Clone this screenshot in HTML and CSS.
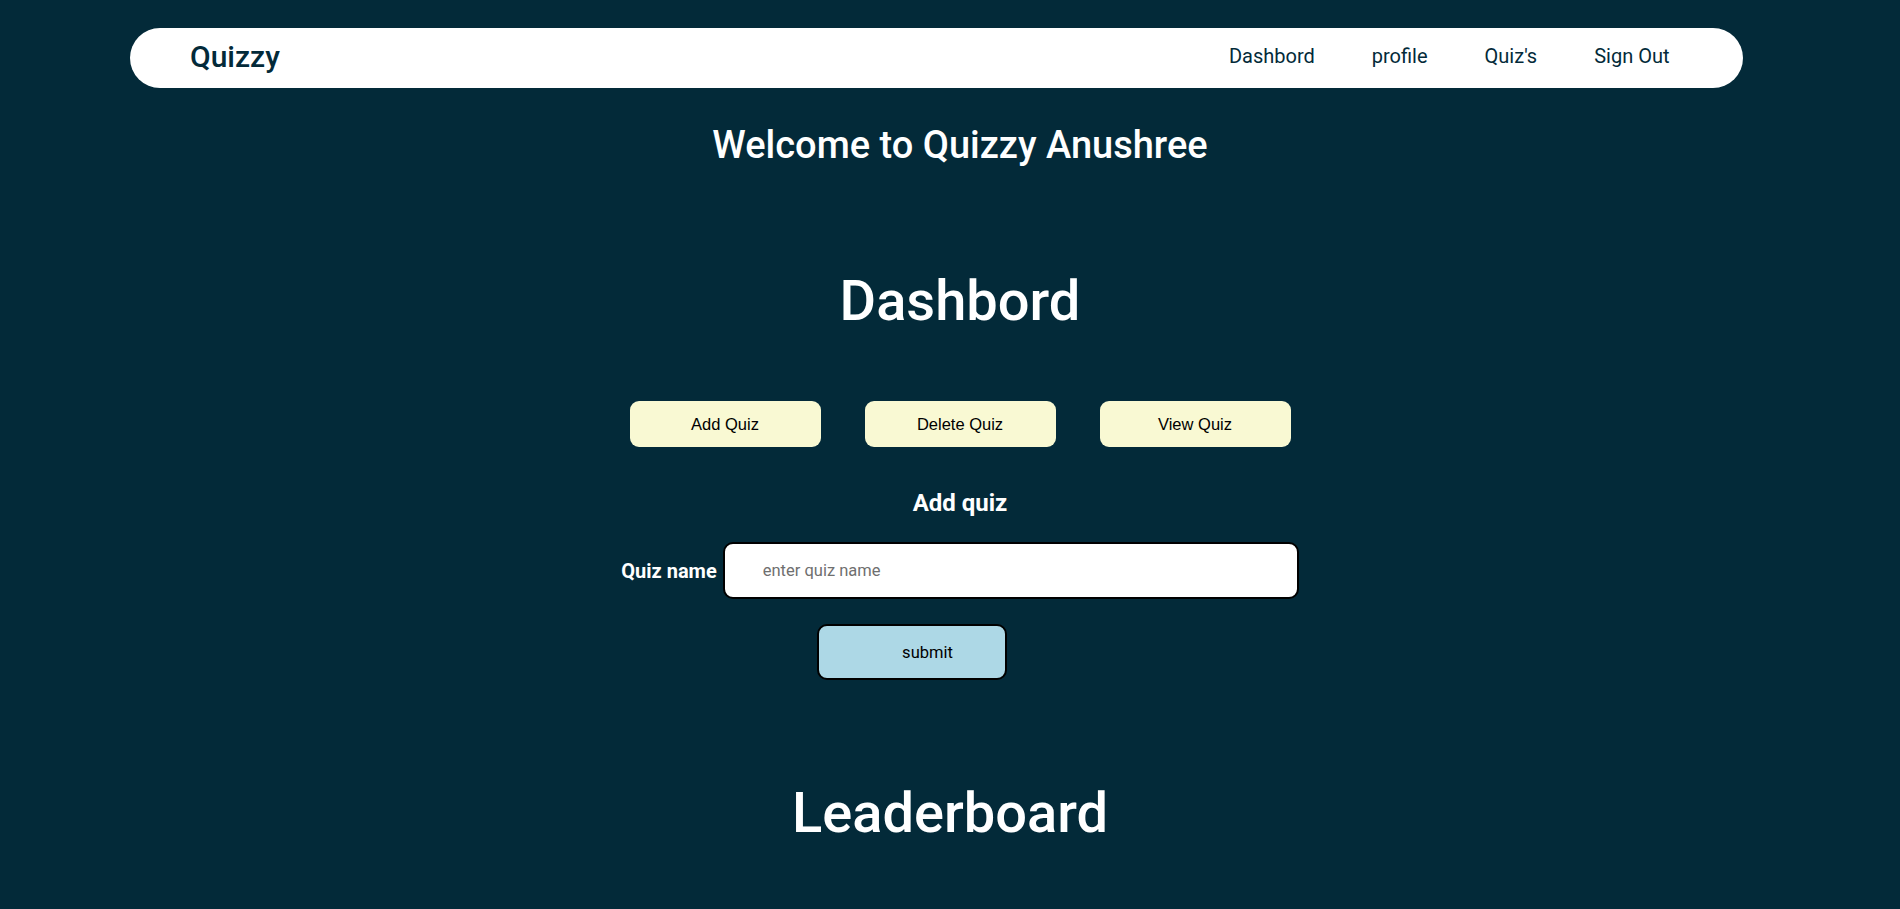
FILE: index.html
```html
<!DOCTYPE html>
<html lang="en">
<head>
<meta charset="utf-8">
<title>Quizzy</title>
<link rel="stylesheet" href="styles.css">
</head>
<body>
<nav class="navbar">
  <div class="brand">Quizzy</div>
  <div class="nav-links">
    <a class="nav-link" href="#">Dashbord</a>
    <a class="nav-link" href="#">profile</a>
    <a class="nav-link" href="#">Quiz's</a>
    <a class="nav-link" href="#">Sign Out</a>
  </div>
</nav>
<main class="main">
  <section class="dash">
    <h2 class="welcome">Welcome to Quizzy Anushree</h2>
    <h1 class="big-title dash-title">Dashbord</h1>
    <div class="actions">
      <button class="action-btn">Add Quiz</button>
      <button class="action-btn">Delete Quiz</button>
      <button class="action-btn">View Quiz</button>
    </div>
    <h3 class="form-title">Add quiz</h3>
    <div class="form-row">
      <label class="form-label" for="qn">Quiz name</label>
      <input class="form-input" id="qn" type="text" placeholder="enter quiz name">
    </div>
    <div class="submit-row">
      <button class="submit-btn">submit</button>
    </div>
  </section>
  <section class="leader">
    <h1 class="big-title">Leaderboard</h1>
  </section>
</main>
</body>
</html>
```
FILE: styles.css
```css
html, body {
  margin: 0;
  padding: 0;
}
body {
  background: #032a39;
  font-family: Roboto, "Liberation Sans", Arial, sans-serif;
  color: #ffffff;
  min-height: 909px;
}
.navbar {
  box-sizing: border-box;
  margin: 28px 0 0 130px;
  width: 1613px;
  height: 60px;
  background: #ffffff;
  border-radius: 30px;
  display: flex;
  align-items: center;
  justify-content: space-between;
  padding: 0 45px 3px 60px;
}
.brand {
  font-size: 30px;
  font-weight: 500;
  color: #032a39;
}
.nav-links {
  display: flex;
  align-items: center;
  padding-bottom: 2px;
}
.nav-link {
  font-size: 20px;
  color: #032a39;
  text-decoration: none;
  padding: 0 28.5px;
}
.main {
  display: flex;
  flex-direction: column;
}
.dash {
  display: flex;
  flex-direction: column;
  align-items: center;
  padding-left: 20px;
}
.welcome {
  margin: 35px 0 0;
  font-size: 38px;
  line-height: 44px;
  font-weight: 500;
}
.big-title {
  margin: 0;
  font-size: 56px;
  line-height: 66px;
  font-weight: 500;
  text-align: center;
}
.dash-title {
  margin-top: 101px;
}
.actions {
  display: flex;
  gap: 44px;
  margin-top: 67px;
}
.action-btn {
  width: 191px;
  height: 46px;
  border: none;
  border-radius: 9px;
  background: #f9f9d3;
  font-family: "Liberation Sans", Arial, sans-serif;
  font-size: 16.5px;
  color: #000000;
}
.form-title {
  margin: 42px 0 0;
  font-size: 24px;
  line-height: 28px;
  font-weight: 700;
}
.form-row {
  display: flex;
  align-items: center;
  gap: 6px;
  margin-top: 25px;
}
.form-label {
  font-size: 20px;
  font-weight: 700;
  color: #ffffff;
}
.form-input {
  box-sizing: border-box;
  width: 576px;
  height: 57px;
  border: 2px solid #000000;
  border-radius: 10px;
  background: #ffffff;
  padding: 0 0 0 38px;
  font-family: Roboto, sans-serif;
  font-size: 16.5px;
  color: #222;
  outline: none;
}
.form-input::placeholder {
  color: #6f6f6f;
}
.submit-row {
  display: flex;
  justify-content: center;
  margin-top: 25px;
  margin-right: 96px;
}
.submit-btn {
  box-sizing: border-box;
  width: 190px;
  height: 56px;
  border: 2px solid #000000;
  border-radius: 10px;
  background: #add8e6;
  padding: 0 0 0 31px;
  font-family: Roboto, sans-serif;
  font-size: 16.5px;
  font-weight: 400;
  color: #000000;
}
.leader {
  margin-top: 100px;
  padding-bottom: 40px;
}
```
